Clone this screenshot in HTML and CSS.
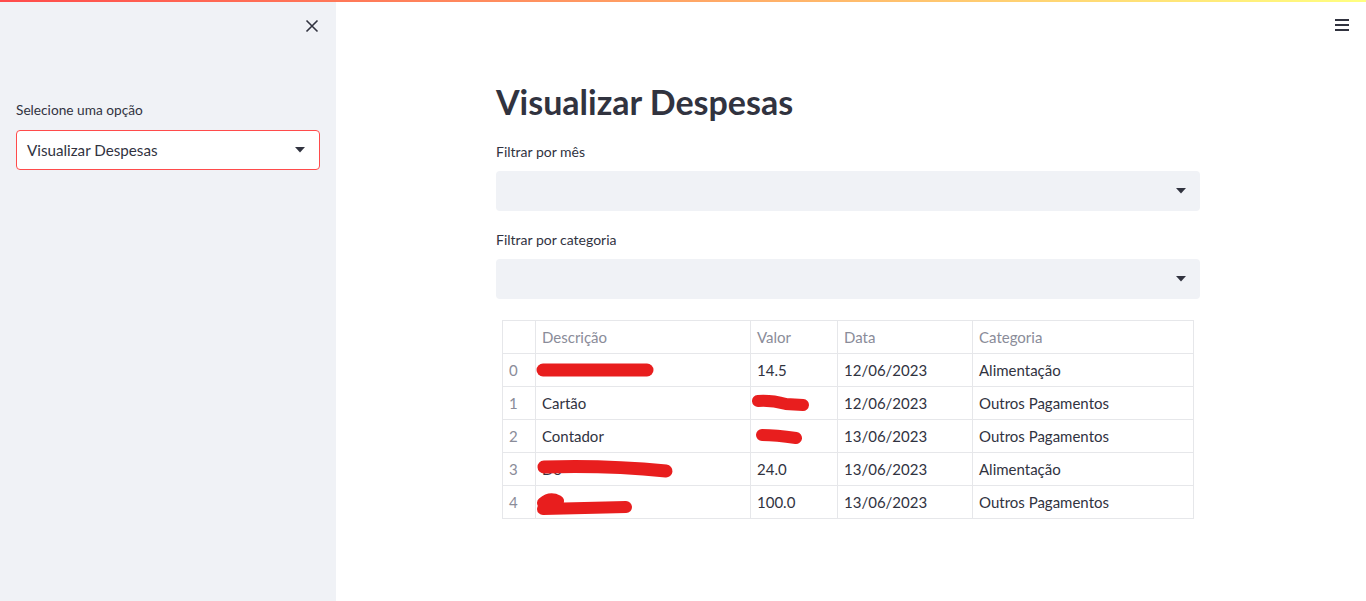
FILE: index.html
```html
<!DOCTYPE html>
<html lang="pt">
<head>
<meta charset="utf-8">
<title>Visualizar Despesas</title>
<link rel="stylesheet" href="styles.css">
</head>
<body>
<div class="decoration"></div>
<div class="app">
  <aside class="sidebar">
    <div class="sidebar-top">
      <button class="close-btn" aria-label="Fechar">
        <svg width="14" height="14" viewBox="0 0 14 14"><path d="M1.5 1.5 L12.5 12.5 M12.5 1.5 L1.5 12.5" stroke="#31333f" stroke-width="1.6" fill="none"/></svg>
      </button>
    </div>
    <div class="field">
      <div class="label">Selecione uma opção</div>
      <div class="select active">
        <span class="select-value">Visualizar Despesas</span>
        <svg class="caret" width="10" height="6" viewBox="0 0 10 6"><path d="M0 0 H10 L5 5.5 Z" fill="#31333f"/></svg>
      </div>
    </div>
  </aside>
  <main class="main">
    <button class="menu-btn" aria-label="Menu">
      <svg width="16" height="14" viewBox="0 0 16 14"><path d="M1 2 H15 M1 7 H15 M1 12 H15" stroke="#31333f" stroke-width="2" fill="none"/></svg>
    </button>
    <div class="block">
      <h1 class="title">Visualizar Despesas</h1>
      <div class="field main-field">
        <div class="label">Filtrar por mês</div>
        <div class="select filled">
          <span class="select-value"></span>
          <svg class="caret" width="10" height="6" viewBox="0 0 10 6"><path d="M0 0 H10 L5 5.5 Z" fill="#31333f"/></svg>
        </div>
      </div>
      <div class="field main-field">
        <div class="label">Filtrar por categoria</div>
        <div class="select filled">
          <span class="select-value"></span>
          <svg class="caret" width="10" height="6" viewBox="0 0 10 6"><path d="M0 0 H10 L5 5.5 Z" fill="#31333f"/></svg>
        </div>
      </div>
      <table class="grid">
        <colgroup>
          <col class="c-idx"><col class="c-desc"><col class="c-val"><col class="c-date"><col class="c-cat">
        </colgroup>
        <thead>
          <tr><th></th><th>Descrição</th><th>Valor</th><th>Data</th><th>Categoria</th></tr>
        </thead>
        <tbody>
          <tr><td class="idx">0</td><td class="redact-cell"><svg class="redact" width="130" height="20" viewBox="0 0 130 20"><path d="M7 11 L111 11" stroke="#e81e1e" stroke-width="13" stroke-linecap="round"/></svg></td><td>14.5</td><td>12/06/2023</td><td>Alimentação</td></tr>
          <tr><td class="idx">1</td><td>Cartão</td><td class="redact-cell"><svg class="redact" width="70" height="22" viewBox="0 0 70 22"><path d="M7 9 Q20 8 35 12 L52 13" stroke="#e81e1e" stroke-width="12" stroke-linecap="round" fill="none"/></svg></td><td>12/06/2023</td><td>Outros Pagamentos</td></tr>
          <tr><td class="idx">2</td><td>Contador</td><td class="redact-cell"><svg class="redact" width="70" height="22" viewBox="0 0 70 22"><path d="M11 10 Q25 10 45 13" stroke="#e81e1e" stroke-width="12" stroke-linecap="round" fill="none"/></svg></td><td>13/06/2023</td><td>Outros Pagamentos</td></tr>
          <tr><td class="idx">3</td><td class="redact-cell"><span class="ghost">Do</span><svg class="redact" width="150" height="24" viewBox="0 0 150 24"><path d="M8 9 Q70 7 130 13" stroke="#e81e1e" stroke-width="13" stroke-linecap="round" fill="none"/></svg></td><td>24.0</td><td>13/06/2023</td><td>Alimentação</td></tr>
          <tr><td class="idx">4</td><td class="redact-cell"><svg class="redact" width="110" height="26" viewBox="0 0 110 26"><path d="M7 12 Q14 6 22 10 M7 18 L90 16" stroke="#e81e1e" stroke-width="12" stroke-linecap="round" fill="none"/></svg></td><td>100.0</td><td>13/06/2023</td><td>Outros Pagamentos</td></tr>
        </tbody>
      </table>
    </div>
  </main>
</div>
</body>
</html>
```

FILE: styles.css
```css
* { box-sizing: border-box; }
html, body { margin: 0; padding: 0; }
body {
  font-family: Lato, "Open Sans", sans-serif;
  color: #31333f;
  background: #ffffff;
  width: 1366px;
  height: 601px;
  overflow: hidden;
}
.decoration {
  height: 2px;
  background: linear-gradient(90deg, #ff4b4b 0%, #ffff80 100%);
}
.app {
  display: flex;
  height: 599px;
}
.sidebar {
  width: 336px;
  flex: 0 0 336px;
  background: #f0f2f6;
  padding: 0 16px;
}
.sidebar-top {
  display: flex;
  justify-content: flex-end;
  padding-top: 13px;
  margin-right: -3px;
  height: 36px;
}
.close-btn, .menu-btn {
  border: 0;
  background: transparent;
  padding: 0;
  width: 22px;
  height: 22px;
  display: flex;
  align-items: center;
  justify-content: center;
  cursor: pointer;
}
.field { display: flex; flex-direction: column; }
.sidebar .field { margin-top: 62px; }
.label {
  font-size: 14px;
  line-height: 20px;
  margin-bottom: 9px;
  color: #31333f;
}
.sidebar .label {
  font-size: 13.7px;
  margin-bottom: 10px;
}
.select {
  height: 40px;
  border-radius: 4px;
  display: flex;
  align-items: center;
  justify-content: space-between;
  padding: 0 14px 0 10px;
}
.select.active {
  background: #ffffff;
  border: 1px solid #ff4b4b;
}
.select.filled {
  background: #f0f2f6;
  padding-right: 14px;
}
.select-value { font-size: 15.2px; }
.main {
  flex: 1;
  position: relative;
  padding-right: 6px;
}
.menu-btn {
  position: absolute;
  top: 12px;
  right: 13px;
}
.block {
  width: 704px;
  margin: 0 auto;
  padding-top: 78px;
}
.title {
  margin: 0;
  font-size: 34px;
  font-weight: 700;
  line-height: 44px;
  color: #31333f;
}
.main-field { margin-top: 18px; }
.main-field + .main-field { margin-top: 19px; }
.grid {
  margin: 21px 0 0 6px;
  border-collapse: collapse;
  table-layout: fixed;
  width: 691px;
  font-size: 15px;
}
.c-idx { width: 33px; }
.c-desc { width: 215px; }
.c-val { width: 87px; }
.c-date { width: 135px; }
.c-cat { width: 221px; }
.grid th, .grid td {
  border: 1px solid #e6e7ea;
  height: 33px;
  padding: 0 6px;
  text-align: left;
  font-weight: 400;
  white-space: nowrap;
  overflow: visible;
}
.grid th { color: #8a8c99; }
.grid td.idx { color: #8a8c99; }
.redact-cell { position: relative; }
.redact {
  position: absolute;
  left: 0;
  top: 5px;
}
.ghost { color: #31333f; }
```
